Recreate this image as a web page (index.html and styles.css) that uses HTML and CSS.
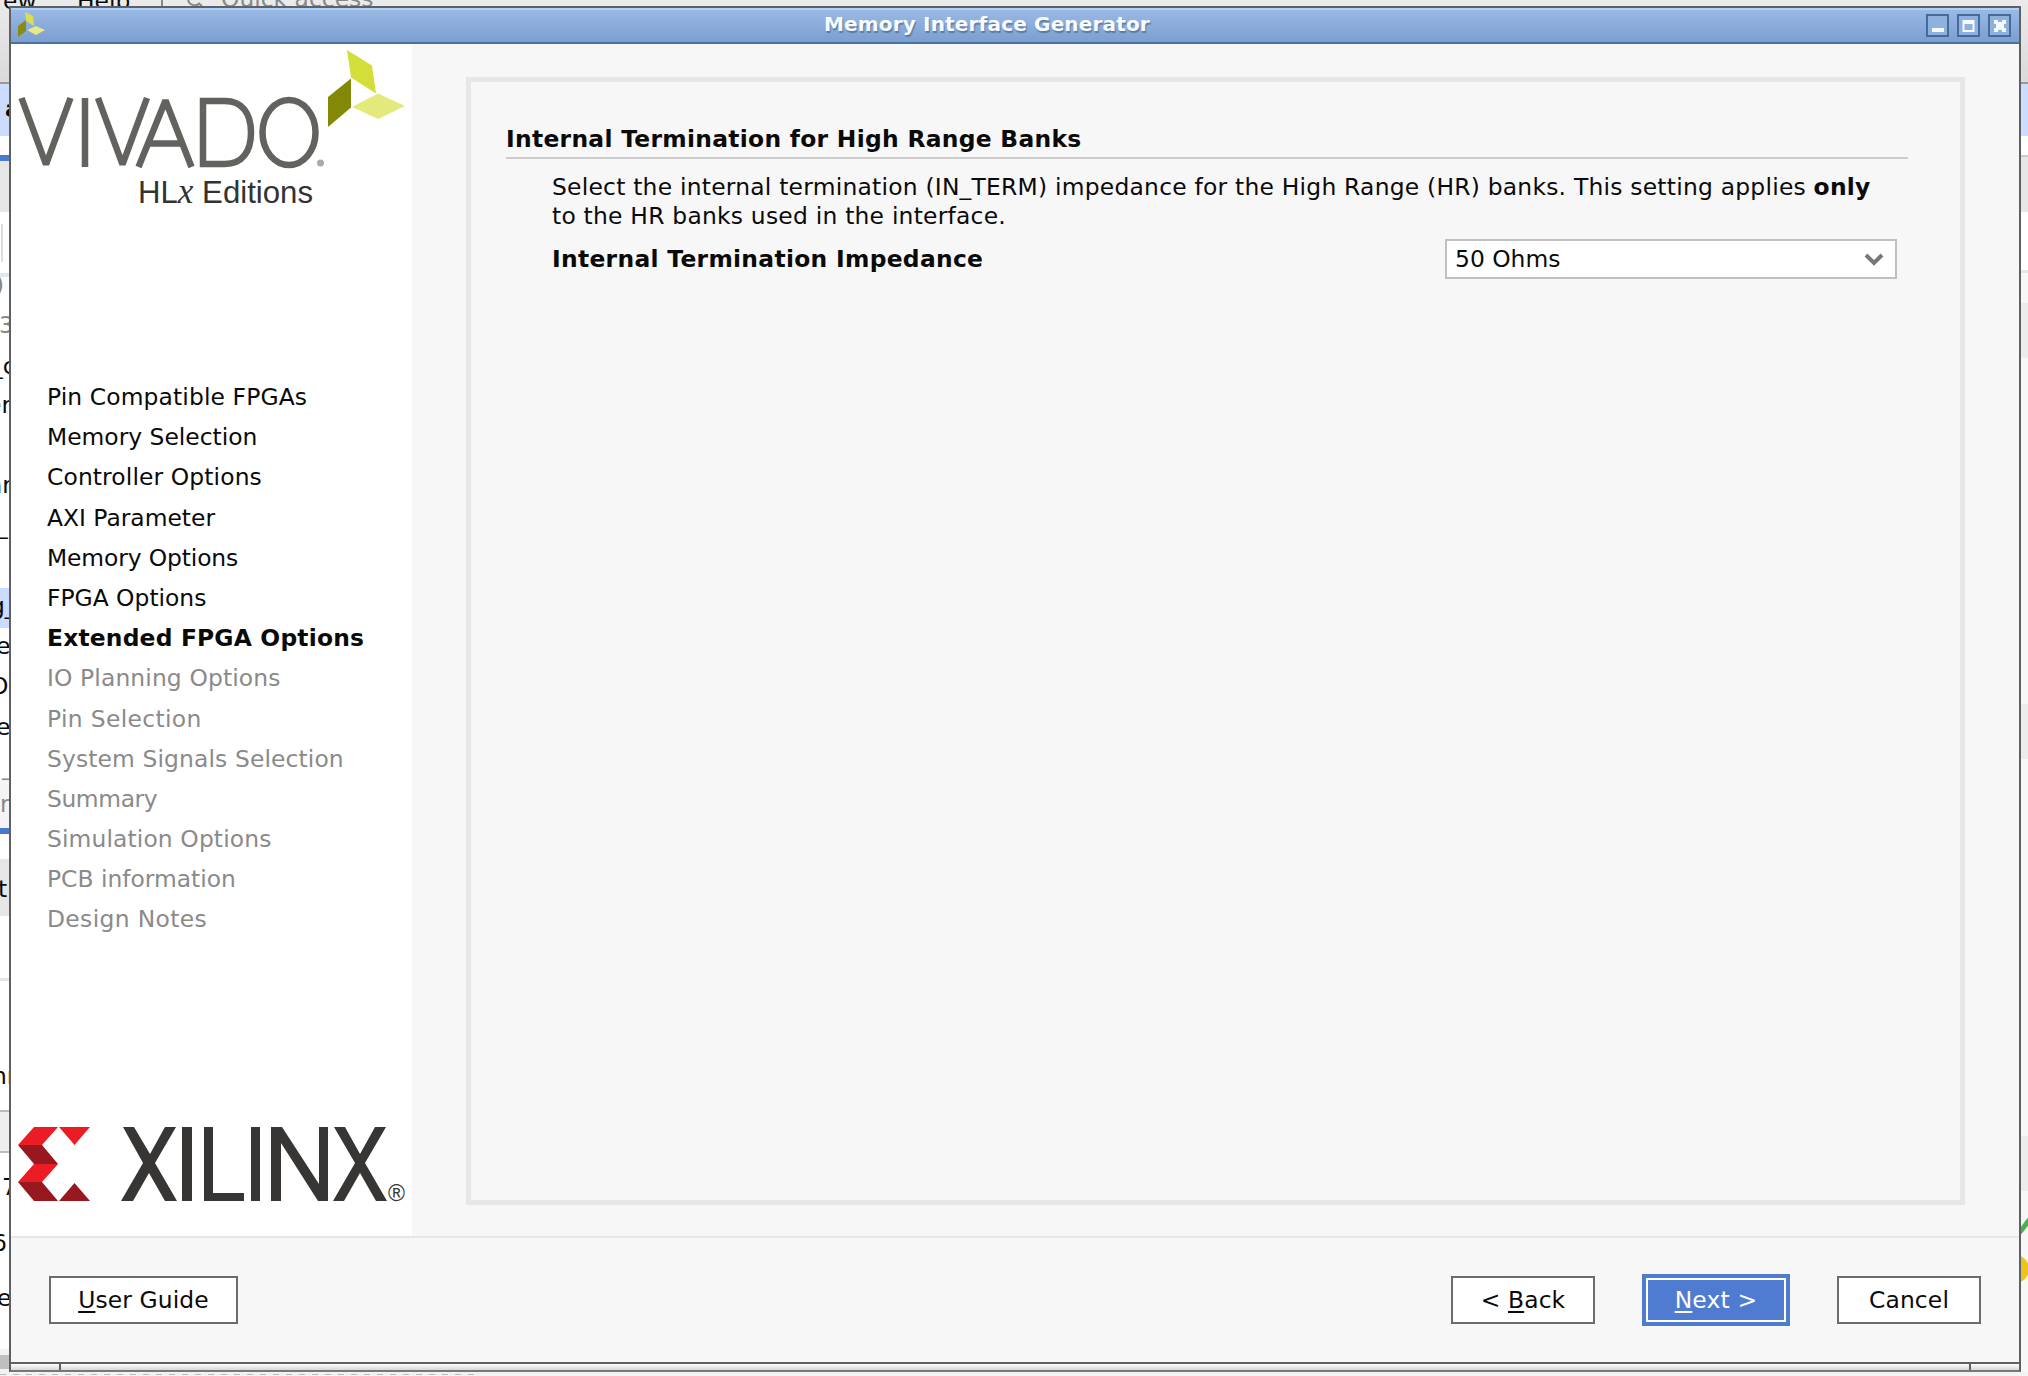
FILE: index.html
```html
<!DOCTYPE html>
<html lang="en">
<head>
<meta charset="utf-8">
<title>Memory Interface Generator</title>
<link rel="stylesheet" href="styles.css">
</head>
<body>
<div class="desktop">
  <div class="backdrop">
    <div class="menu-strip"></div>
    <div class="band blue"></div>
    <div class="band white"></div>
    <div class="band accent"></div>
    <div class="band gray"></div>
    <div class="band rest"></div>
    <div class="band dashes"></div>
  </div>
  <span class="peek menu" style="left:3px;top:-13px">ew</span>
  <span class="peek menu" style="left:77px;top:-13px">Help</span>
  <span class="peek menu dim" style="left:221px;top:-15px">Quick access</span>
  <svg class="menu-search" width="60" height="8" viewBox="0 0 60 8"><path d="M2 0v8M28 0a7 7 0 0 0 12 3M38 3l4 3" fill="none" stroke="#888" stroke-width="2"/></svg>
  <div class="edge left-edge">
    <i class="mark" style="top:224px;left:1px;width:2px;height:38px;background:#ddd"></i>
    <i class="mark" style="top:273px;height:4px;background:#e6e6e6"></i>
    <i class="mark" style="top:588px;height:40px;background:#cbdcff"></i>
    <i class="mark" style="top:780px;height:48px;background:#f4f4f4"></i>
    <i class="mark" style="top:828px;height:6px;background:#4a79d0"></i>
    <i class="mark" style="top:859px;height:57px;background:#e6e6e6"></i>
    <i class="mark" style="top:978px;height:3px;background:#e6e6e6"></i>
    <i class="mark" style="top:1110px;height:43px;background:#eee;border:solid #bbb;border-width:2px 0"></i>
    <i class="mark" style="top:1349px;height:24px;background:#f2f2f2"></i>
    <i class="mark" style="top:1355px;height:14px;background:#bfbfbf"></i>
    <span class="peek strong" style="left:5px;top:95px">a</span>
    <span class="peek dim" style="left:-5px;top:271px">)</span>
    <span class="peek dim" style="left:-1px;top:311px">3</span>
    <span class="peek" style="left:-9px;top:352px">_c</span>
    <span class="peek" style="left:-13px;top:391px">er</span>
    <span class="peek" style="left:-12px;top:471px">ar</span>
    <span class="peek" style="left:-4px;top:512px">_</span>
    <span class="peek" style="left:-10px;top:592px">g_</span>
    <span class="peek" style="left:-4px;top:632px">e</span>
    <span class="peek" style="left:-10px;top:672px">O</span>
    <span class="peek" style="left:-4px;top:713px">e</span>
    <span class="peek dim" style="left:2px;top:753px">_</span>
    <span class="peek dim" style="left:0px;top:790px">r</span>
    <span class="peek" style="left:-2px;top:875px">ti</span>
    <span class="peek" style="left:-8px;top:1062px">nr</span>
    <span class="peek" style="left:2px;top:1173px">7</span>
    <span class="peek" style="left:-8px;top:1229px">6</span>
    <span class="peek" style="left:-3px;top:1284px">e</span>
  </div>
  <div class="edge right-edge">
    <i class="mark" style="top:155px;height:57px;background:#e6e6e6;border-top:2px solid #ccc"></i>
    <i class="mark" style="top:270px;height:1103px;background:#f7f7f7;border-top:3px solid #e6e6e6"></i>
    <i class="mark" style="top:303px;height:55px;background:#ececec"></i>
    <i class="mark" style="top:704px;height:55px;background:#ececec"></i>
    <i class="mark" style="top:1136px;height:55px;background:#ececec"></i>
    <svg class="status" width="8" height="70" viewBox="0 0 8 70"><path d="M-2 16C2 12 4 8 9 2" stroke="#49b249" stroke-width="5" fill="none"/><circle cx="-6" cy="52" r="14" fill="#eac51c"/></svg>
  </div>

  <section class="window">
    <header class="titlebar">
      <svg class="app-icon" width="28" height="26" viewBox="0 0 28 26"><path d="M7 0l8 4 1 10-8-5z" fill="#dade55"/><path d="M0 14l8-6v11l-8 6z" fill="#8a8b12"/><path d="M9 18l9-4 9 4-9 5z" fill="#e6e98a"/></svg>
      <h1 class="title">Memory Interface Generator</h1>
      <div class="controls">
        <svg class="control" width="23" height="23" viewBox="0 0 23 23"><rect x="1" y="1" width="21" height="21" fill="#8fb1de" stroke="#456b9d" stroke-width="2"/><path d="M6 14h12v4h-12z" fill="#f5f8fc"/></svg>
        <svg class="control" width="23" height="23" viewBox="0 0 23 23"><rect x="1" y="1" width="21" height="21" fill="#8fb1de" stroke="#456b9d" stroke-width="2"/><path d="M5.500 6h12v12h-12zM7.500 10v6h8v-6z" fill="#f5f8fc" fill-rule="evenodd"/></svg>
        <svg class="control" width="23" height="23" viewBox="0 0 23 23"><rect x="1" y="1" width="21" height="21" fill="#8fb1de" stroke="#456b9d" stroke-width="2"/><path d="M6 6h4v2h4v-2h4v4h-2v4h2v4h-4v-2h-4v2h-4v-4h2v-4h-2z" fill="#f5f8fc"/></svg>
      </div>
    </header>
    <div class="body">
      <aside class="sidebar">
        <svg class="vivado" width="401" height="170" viewBox="11 44 401 170">
          <path d="M347 50l25 15.500 4 28-25-16z" fill="#d3df38"/>
          <path d="M328 97l23-18.500v29L328 127z" fill="#838807"/>
          <path d="M352 107l26-13.500 27 12.500-27 13z" fill="#e3e97b"/>
          <g fill="none" stroke="#63625f" stroke-width="6.500">
            <path d="M21.500 98L46 164.500L70.500 98M98 98L122.500 164.500L147 98" stroke-linejoin="bevel"/>
            <path d="M85 98v69M138.500 167L165.500 100.500L191.500 167M150 143.500h33" stroke-linejoin="bevel"/>
            <path d="M203 101h22c17 0 26 12 26 31.500s-9 31.500-26 31.500h-22z"/>
            <ellipse cx="289" cy="132.500" rx="26.500" ry="32.500"/>
          </g>
          <circle cx="320.500" cy="163" r="3.500" fill="#aaa"/>
          <text class="edition" x="138" y="203" textLength="175" lengthAdjust="spacingAndGlyphs">HL<tspan class="edition-x">x</tspan> Editions</text>
        </svg>
        <ol class="steps">
          <li class="relaxed">Pin Compatible FPGAs</li>
          <li>Memory Selection</li>
          <li class="relaxed">Controller Options</li>
          <li>AXI Parameter</li>
          <li class="snug">Memory Options</li>
          <li>FPGA Options</li>
          <li class="current">Extended FPGA Options</li>
          <li class="pending relaxed">IO Planning Options</li>
          <li class="pending loose">Pin Selection</li>
          <li class="pending relaxed">System Signals Selection</li>
          <li class="pending tight">Summary</li>
          <li class="pending relaxed">Simulation Options</li>
          <li class="pending">PCB information</li>
          <li class="pending loose">Design Notes</li>
        </ol>
        <svg class="xilinx" width="401" height="90" viewBox="11 1117 401 90">
          <path d="M34 1127h24l-16 18h-24zM59 1127h31l-15.500 18zM34 1164h24l-16 18h-24z" fill="#ec1c24"/>
          <path d="M18 1145h24l16 19h-24zM18 1182h24l16 19h-24zM59 1201l15.500-18 15.500 18z" fill="#98181f"/>
          <g fill="#373634">
            <path d="M123 1127h11l16 27 15-27h11l-21 36 22 38h-12l-16-28-16 28h-12l22-38z"/>
            <path d="M182 1127h10v74h-10zM204 1127h9v66h31v8h-40zM251 1127h9v74h-9z"/>
            <path d="M271 1127h11l37 57v-57h9v74h-10l-37-58v58h-10z"/>
            <path d="M334 1127h11l15 27 15-27h11l-21 36 22 38h-11l-16-28-16 28h-11l22-38z"/>
          </g>
          <text class="registered" x="388" y="1201">®</text>
        </svg>
      </aside>
      <main class="content">
        <div class="panel">
          <h2 class="heading">Internal Termination for High Range Banks</h2>
          <p class="description">Select the internal termination (IN_TERM) impedance for the High Range (HR) banks. This setting applies <b>only</b><br>to the HR banks used in the interface.</p>
          <div class="field">
            <label class="label">Internal Termination Impedance</label>
            <div class="select"><span>50 Ohms</span><svg width="20" height="13" viewBox="0 0 20 13"><path d="M2 2l8 8 8-8" fill="none" stroke="#777" stroke-width="4"/></svg></div>
          </div>
        </div>
      </main>
    </div>
    <footer class="footer">
      <button class="button guide"><span><u>U</u>ser Guide</span></button>
      <button class="button back"><span>&lt; <u>B</u>ack</span></button>
      <button class="button next"><span><u>N</u>ext &gt;</span></button>
      <button class="button cancel"><span>Cancel</span></button>
    </footer>
    <div class="grip"><i></i><i></i></div>
  </section>
</div>
</body>
</html>
```
FILE: styles.css
```css
* { box-sizing: border-box; }
body { margin: 0; font-family: "DejaVu Sans", sans-serif; font-size: 23.4px; color: #0a0a0a; }
.desktop { position: relative; width: 2028px; height: 1376px; overflow: hidden; background: #f4f4f4; }
.backdrop { position: absolute; inset: 0; display: flex; flex-direction: column; }
.menu-strip { height: 84px; background: linear-gradient(#ebebeb, #dadada); border-bottom: 2px solid #999; }
.band.blue { height: 52px; background: #cbdcff; }
.band.white { height: 19px; background: #fff; }
.band.accent { height: 6px; background: #4a79d0; }
.band.gray { height: 51px; background: #e6e6e6; }
.band.rest { flex: 1; background: #f2f2f2; }
.band.dashes { height: 1px; margin-bottom: 1px; width: 480px; background: repeating-linear-gradient(90deg, #bbb 0 6px, #eee 6px 13px); }
.peek { position: absolute; line-height: 28px; white-space: pre; }
.peek.strong { font-weight: bold; }
.peek.dim { color: #888; }
.menu-search { position: absolute; left: 160px; top: 0; }
.edge { position: absolute; top: 0; height: 1373px; overflow: hidden; }
.left-edge { left: 0; width: 9px; background: linear-gradient(transparent 212px, #fff 212px); }
.right-edge { left: 2021px; width: 7px; background: linear-gradient(transparent 136px, #fff 136px); }
.mark { position: absolute; left: 0; width: 100%; }
.status { position: absolute; left: 0; top: 1217px; }

.window { position: absolute; left: 9px; top: 6px; width: 2012px; height: 1366px; border: 2px solid #5f6063; border-bottom-color: #77787a; background: #f7f7f7; display: flex; flex-direction: column; }
.titlebar { height: 36px; display: flex; align-items: flex-start; padding: 5px 8px 0 7px; background: linear-gradient(#9ab9e4, #7b9fd0); border-top: 2px solid #a9d1fb; border-bottom: 2px solid #4a70a5; }
.app-icon { margin-top: -3px; }
.title { margin: -6px 0 0 778px; color: #f8fbff; font-size: 20px; letter-spacing: 0.17px; line-height: 30px; text-shadow: 1px 2px 1px rgba(50, 75, 110, 0.5); }
.controls { display: flex; margin: -1px 0 0 auto; gap: 8px; }
.body { height: 1192px; display: flex; }
.sidebar { width: 401px; background: #fff; display: flex; flex-direction: column; }
.vivado { display: block; }
.edition { font-family: "Liberation Sans", sans-serif; font-size: 32px; fill: #333; }
.edition-x { font-family: "Liberation Serif", serif; font-style: italic; font-size: 36px; }
.steps { list-style: none; margin: 163px 0 0; padding: 0 0 0 36px; height: 563px; }
.steps li { height: 40.200px; line-height: 40px; white-space: nowrap; }
.steps .current { font-weight: bold; letter-spacing: 0.18px; }
.steps .pending { color: #8a8a8a; }
.steps .relaxed { letter-spacing: 0.12px; }
.steps .loose { letter-spacing: 0.35px; }
.steps .snug { letter-spacing: -0.12px; }
.steps .tight { letter-spacing: -0.4px; }
.xilinx { margin-top: 177px; }
.registered { font-family: "Liberation Sans", sans-serif; font-size: 23px; fill: #373634; }
.content { flex: 1; padding: 33px 54px 31px 54px; }
.panel { height: 1128px; border: 5px solid #e7e7e7; padding: 37px 52px 0 35px; }
.heading { margin: 0; height: 40px; line-height: 40px; border-bottom: 2px solid #ccc; font-size: 23.4px; letter-spacing: 0.29px; }
.description { margin: 14px 0 0 46px; line-height: 29px; letter-spacing: 0.23px; white-space: nowrap; }
.field { display: flex; justify-content: space-between; align-items: center; margin: 8px 11px 0 46px; height: 40px; }
.label { font-weight: bold; letter-spacing: 0.3px; }
.select { width: 452px; height: 40px; border: 2px solid #c0c0c0; background: #fff; display: flex; align-items: center; justify-content: space-between; padding: 0 11px 0 8px; }
.footer { height: 126px; border-top: 2px solid #e7e7e7; display: flex; align-items: center; padding: 0 38px; }
.button { height: 48px; padding: 0; border: 2px solid #6c6c6c; background: #fff; color: #0a0a0a; font: inherit; }
.button u { text-decoration-thickness: 2px; text-underline-offset: 3px; }
.guide { width: 189px; margin-right: auto; }
.guide, .back { letter-spacing: 0.12px; }
.back { width: 144px; margin-right: 47px; }
.next { width: 148px; height: 52px; margin-right: 47px; color: #fff; background: #4f7bd0; border: 4px solid #4f7bd0; box-shadow: inset 0 0 0 2px #fff; letter-spacing: 0.2px; }
.cancel { width: 144px; letter-spacing: 0.15px; }
.grip { height: 8px; border-top: 2px solid #5f6063; background: linear-gradient(#fff, #d5d7d8); display: flex; justify-content: space-between; }
.grip i { width: 50px; }
.grip i:first-child { border-right: 2px solid #5f6063; }
.grip i:last-child { border-left: 2px solid #5f6063; }
```
